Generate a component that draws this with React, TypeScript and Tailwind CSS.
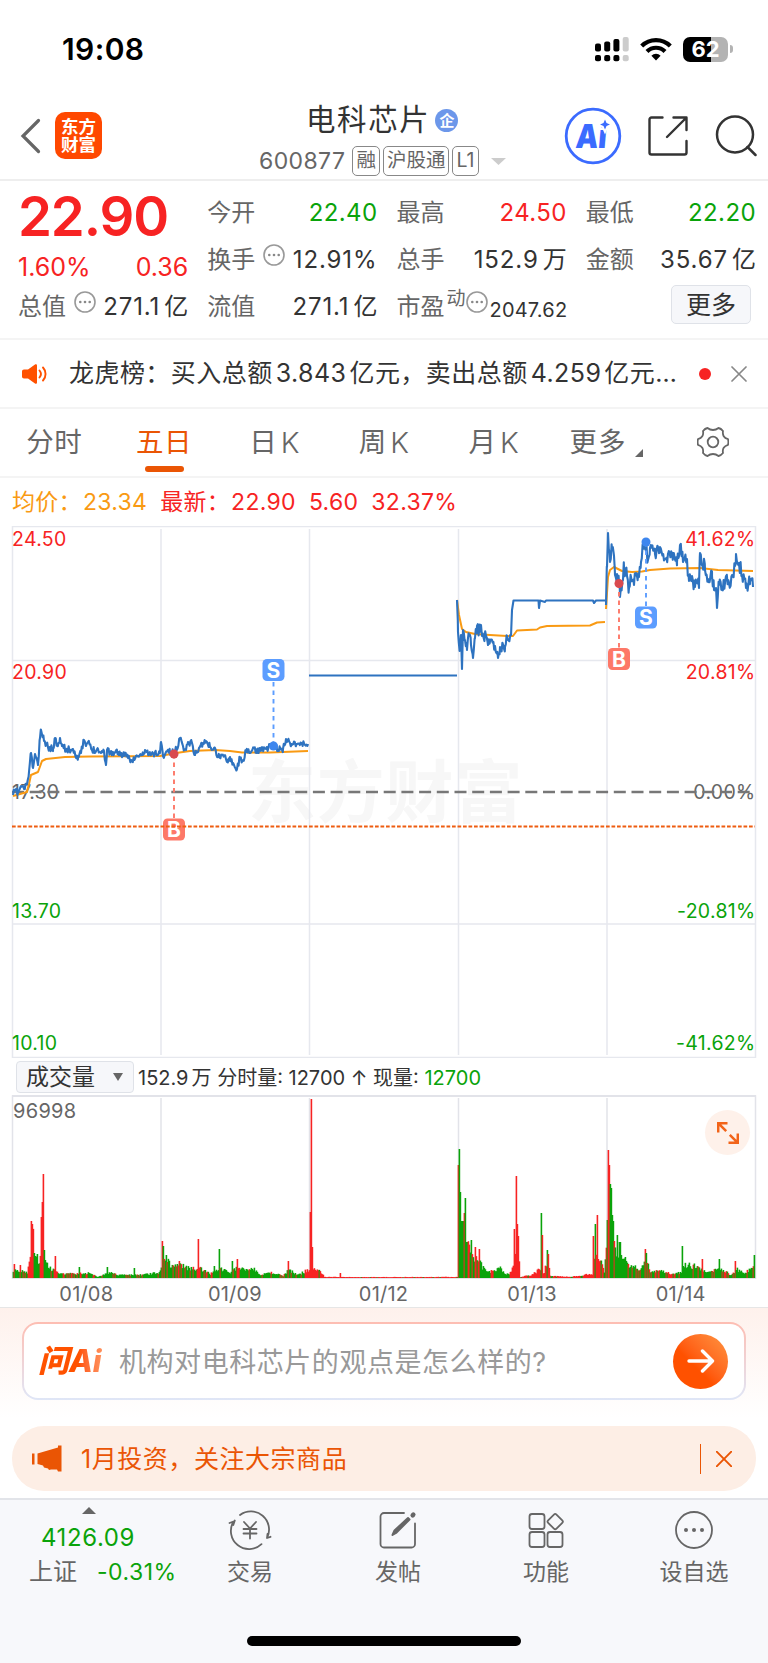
import type { ReactNode } from "react";

type Point = [x: number, y: number];
type Bar = { x: number; h: number; up: boolean };

const UP = "#f72323";
const DOWN = "#0aa30a";

// small deterministic generator so the chart is the same on each render
const createRandom = (seed: number) => () => {
  seed = (seed * 16807) % 2147483647;
  return seed / 2147483647;
};

const valueAt = (points: Point[], x: number) => {
  for (let i = 1; i < points.length; i++) {
    const [x0, y0] = points[i - 1];
    const [x1, y1] = points[i];
    if (x <= x1) return x1 === x0 ? y1 : y0 + ((y1 - y0) * (x - x0)) / (x1 - x0);
  }
  return points[points.length - 1][1];
};

const toPath = (points: Point[]) => "M" + points.map(([x, y]) => `${x} ${y.toFixed(1)}`).join("L");

const jitterPath = (points: Point[], amount: number, seed: number) => {
  const random = createRandom(seed);
  const result: Point[] = [];
  points.forEach(([x, y], i) => {
    result.push([x, y]);
    const next = points[i + 1];
    if (!next) return;
    for (let px = x + 0.8; px < next[0]; px += 0.8) {
      result.push([px, valueAt([[x, y], next], px) + (random() - 0.5) * 2 * amount]);
    }
  });
  return toPath(result);
};

const PRICE_EARLY: Point[] = [
  [13, 795], [15, 790], [18, 793], [21, 786], [24, 789], [27, 784], [29, 772], [31, 753], [33, 768], [35, 754],
  [38, 765], [40, 738], [41, 730], [44, 741], [49, 748], [53, 749], [55, 738], [57, 745], [60, 738], [62, 746],
  [67, 750], [73, 749], [78, 758], [81, 753], [84, 740], [86, 746], [88, 742], [92, 750], [98, 749], [101, 753],
  [104, 751], [106, 765], [107, 750], [112, 753], [118, 752], [124, 756], [128, 756], [132, 761], [138, 756],
  [143, 755], [145, 750], [150, 755], [156, 753], [160, 753], [161, 742], [163, 756], [168, 750], [171, 754],
  [176, 750], [180, 738], [183, 746], [186, 750], [188, 742], [192, 743], [195, 755], [199, 748], [203, 743],
  [207, 742], [210, 747], [214, 748], [218, 757], [222, 755], [227, 760], [230, 757], [234, 765], [237, 769],
  [240, 758], [243, 760], [246, 752], [250, 753], [254, 748], [257, 753], [260, 748], [266, 749], [270, 746],
  [274, 745], [278, 750], [283, 749], [286, 739], [290, 743], [295, 743], [301, 744], [308, 744],
];

const PRICE_0113_OPEN: Point[] = [
  [457, 600], [458, 632], [460, 650], [461, 635], [462, 669], [463, 630], [465, 640], [467, 650], [469, 635],
  [471, 645], [473, 658], [475, 638], [477, 626], [479, 632], [481, 625], [482, 636], [486, 636], [488, 645],
  [491, 640], [495, 646], [498, 658], [500, 647], [505, 647], [507, 636], [511, 636],
];

const PRICE_0113_LIMIT: Point[] = [
  [511, 636], [512, 610], [513.5, 600.5], [538.5, 600.5], [539, 608], [540, 600.5], [545, 602], [546, 600.5],
  [593, 600.5], [594, 603], [596, 600.5], [605, 600.5],
];

const PRICE_0114: Point[] = [
  [606, 605], [607, 567], [608, 533], [610, 562], [612, 548], [614, 556], [615, 575], [617, 574], [619, 583],
  [620, 597], [623, 580], [624, 567], [627, 576], [629, 588], [631, 577], [634, 585], [636, 573], [639, 577],
  [641, 562], [643, 547], [645, 540], [648, 560], [650, 548], [655, 554], [660, 547], [664, 560], [668, 554],
  [673, 553], [677, 562], [680, 545], [683, 562], [687, 559], [689, 581], [692, 576], [695, 587], [699, 585],
  [700, 553], [705, 570], [708, 579], [712, 576], [714, 590], [716, 588], [717, 608], [719, 585], [722, 590],
  [726, 577], [729, 583], [732, 575], [735, 566], [736, 554], [739, 563], [742, 575], [746, 583], [750, 582], [753, 587],
];

const AVERAGES: Point[][] = [
  [
    [13, 796], [27, 792], [29, 784], [31, 775], [38, 772], [42, 761], [46, 759], [65, 757], [90, 756.5], [160, 756],
    [176, 753], [190, 751], [215, 750], [230, 751], [242, 752.5], [270, 752.5], [308, 751],
  ],
  [
    [457, 600], [459, 615], [462, 629], [466, 632], [475, 634], [490, 635], [507, 636], [513, 636], [517, 630.5],
    [537, 629.5], [540, 627.5], [547, 626], [590, 625.5], [597, 622.5], [605, 622],
  ],
  [
    [606, 609], [608, 577], [610, 570], [614, 567], [622, 571], [632, 572], [642, 571.5], [650, 570], [670, 568.5],
    [700, 568], [718, 570], [753, 571],
  ],
];

// usual bar height along the axis, isolated peaks are listed below
const VOLUME_BASE: Point[] = [
  [13, 8], [20, 7], [27, 5], [29, 14], [31, 40], [33, 42], [35, 22], [39, 13], [41, 45], [43, 60], [45, 20], [48, 10],
  [52, 8], [60, 4], [76, 4], [90, 5], [97, 1], [110, 5], [118, 3], [130, 3], [140, 3], [158, 5], [162, 14], [165, 23],
  [170, 12], [180, 12], [192, 9], [200, 9], [210, 4], [220, 9], [230, 5], [237, 11], [246, 8], [254, 8], [260, 3],
  [272, 5], [283, 2], [288, 8], [298, 3], [308, 8], [313, 10], [322, 5], [324, 1], [360, 0.8], [457, 1], [458, 80],
  [465, 56], [467, 40], [470, 24], [476, 20], [482, 11], [490, 6], [500, 9], [504, 4], [511, 5], [514, 22], [518, 38],
  [520, 1], [531, 3], [539, 8], [544, 5], [547, 20], [550, 2], [570, 1], [592, 4], [594, 22], [600, 17], [604, 6],
  [607, 50], [612, 50], [615, 30], [621, 22], [628, 12], [640, 9], [646, 17], [650, 6], [660, 7], [670, 4], [681, 6],
  [683, 14], [690, 12], [700, 10], [710, 5], [720, 10], [730, 3], [737, 8], [744, 5], [750, 8], [754, 14],
];

const VOLUME_PEAKS: [number, number, boolean][] = [
  [14, 14, true], [20, 13, true], [31, 57, true], [32, 54, true], [34, 25, false], [37, 24, false], [41, 61, true],
  [42, 76, true], [43, 104, true], [44, 28, false], [45, 18, false], [55, 22, true], [79, 11, false], [107, 11, false],
  [134, 10, false], [162, 37, true], [163, 32, false], [166, 23, false], [179, 17, true], [198, 39, true],
  [214, 12, false], [219, 29, false], [232, 17, false], [237, 19, true], [288, 17, true], [310, 66, true],
  [311, 179, true], [312, 31, true], [340, 5, true], [458, 113, true], [459, 129, false], [460, 86, false],
  [461, 57, false], [462, 57, false], [463, 57, false], [464, 65, true], [465, 80, false], [466, 36, false],
  [467, 36, false], [471, 38, false], [475, 31, true], [479, 29, true], [514, 49, true], [516, 102, true],
  [517, 54, true], [518, 42, true], [541, 65, false], [542, 43, true], [547, 28, false], [548, 24, true],
  [593, 42, true], [595, 54, false], [597, 63, true], [607, 58, false], [608, 128, true], [609, 113, true],
  [610, 94, false], [611, 90, false], [612, 63, false], [613, 57, false], [614, 37, true], [617, 43, false],
  [619, 36, false], [620, 36, false], [645, 29, true], [646, 25, false], [682, 32, false], [702, 19, true],
  [719, 19, false], [735, 17, true], [754, 23, false],
];

const buildVolume = (): Bar[] => {
  const random = createRandom(4217);
  const bars: Bar[] = [];
  for (let x = 13; x <= 754; x++) {
    const peak = VOLUME_PEAKS.find((p) => p[0] === x);
    const h = valueAt(VOLUME_BASE, x) * (0.75 + random() * 0.55);
    const mostlyUp = (x > 28 && x < 34) || (x > 39 && x < 44) || (x > 305 && x < 458) || (x > 510 && x < 600);
    const up = random() < (mostlyUp ? 0.92 : 0.25);
    bars.push(peak ? { x, h: peak[1], up: peak[2] } : { x, h: Math.max(h, 0.6), up });
  }
  return bars;
};

const volumeBars = buildVolume();

const DotsIcon = () => (
  <svg className="h-[22px] w-[22px] shrink-0" viewBox="0 0 22 22" fill="none" stroke="#999" strokeWidth="1.6">
    <circle cx="11" cy="11" r="10" />
    <g fill="#888" stroke="none">
      <circle cx="6.3" cy="11" r="1.3" />
      <circle cx="11" cy="11" r="1.3" />
      <circle cx="15.7" cy="11" r="1.3" />
    </g>
  </svg>
);

function StatusBar() {
  return (
    <div className="flex h-[98px] items-center justify-between pl-[62px] pr-[35px]">
      <span className="text-[30px] font-semibold leading-none tracking-[0.4px] text-black">19:08</span>
      <div className="flex items-center gap-[11px]">
        <svg className="h-[26px] w-[34px]" viewBox="0 0 34 26">
          {[8, 10, 12.5].map((h, i) => (
            <g key={h}>
              <rect x={i * 9.2} y={15.5 - h} width="6" height={h} rx="2" />
              <rect x={i * 9.2} y="19" width="6" height="6.3" rx="2" />
            </g>
          ))}
          <g fill="#ccc">
            <rect x="27.7" y="1" width="6" height="14.5" rx="2" />
            <rect x="27.7" y="19" width="6" height="6.3" rx="2" />
          </g>
        </svg>
        <svg className="h-6 w-8" viewBox="0 0 32 24" fill="none" stroke="#000" strokeWidth="4.2">
          <path d="M1.7 9A20.2 20.2 0 0 1 30.3 9" />
          <path d="M7 14.5a12.7 12.7 0 0 1 18 0" />
          <path d="M16 23.5l-4.6-4.8a6.5 6.5 0 0 1 9.2 0z" fill="#000" stroke="none" />
        </svg>
        <div className="flex items-center gap-[2px]">
          <div className="flex h-[25px] w-[45px] items-center justify-center rounded-[7px] bg-[linear-gradient(90deg,#000_62%,#b3b3b3_62%)] text-[22px] font-bold text-white">
            62
          </div>
          <div className="h-2 w-[3px] rounded-r-full bg-[#b3b3b3]" />
        </div>
      </div>
    </div>
  );
}

const Tag = ({ children }: { children: ReactNode }) => (
  <span className="flex h-[30px] items-center rounded-[5px] border border-[#888] px-[3px] text-[19.5px] leading-none text-[#666]">
    {children}
  </span>
);

function Header() {
  return (
    <header className="flex h-[83px] items-start border-b-2 border-[#eee] pl-5 pr-[11px]">
      <svg className="mt-[20px] h-9 w-[21px]" viewBox="0 0 21 36" fill="none" stroke="#666" strokeWidth="3.2" strokeLinecap="round">
        <path d="M18.5 2.5L3 18l15.5 15.5" />
      </svg>
      <div className="ml-[14px] mt-[14px] flex h-[47px] w-[47px] flex-col items-center justify-center rounded-[10px] bg-[#ff4800] text-[17.5px] font-bold leading-[18px] text-white">
        <span>东方</span>
        <span>财富</span>
      </div>
      <div className="ml-[157px] flex flex-col">
        <div className="ml-[47px] flex h-[44px] items-center">
          <span className="text-[29.5px] leading-none tracking-[1.6px] text-[#333]">电科芯片</span>
          <span className="ml-[5px] flex h-[23px] w-[23px] items-center justify-center rounded-full bg-[#6c97ea] text-[15px] font-bold leading-none text-white">
            企
          </span>
        </div>
        <div className="mt-[4px] flex items-center">
          <span className="text-[23px] leading-none tracking-[0.4px] text-[#666]">600877</span>
          <div className="ml-[7px] flex gap-[3px]">
            <Tag>融</Tag>
            <Tag>沪股通</Tag>
            <Tag>L1</Tag>
          </div>
          <svg className="ml-[12px] h-[7px] w-[15px]" viewBox="0 0 15 7">
            <path d="M0 0h15L7.5 7z" fill="#ccc" />
          </svg>
        </div>
      </div>
      <div className="ml-auto mt-[9px] flex items-center">
        <svg className="h-[58px] w-[58px]" viewBox="0 0 58 58">
          <circle cx="29" cy="29" r="26.8" fill="none" stroke="#3b6bff" strokeWidth="2.8" />
          <text transform="translate(11 40.5) skewX(-5) scale(.86 1)" fontSize="33" fontWeight="900" fill="#3b6bff">
            Ai
          </text>
          <path d="M41 12.500l1.500 3.500 3.500 1.500-3.500 1.500-1.500 3.500-1.500-3.500-3.500-1.500 3.500-1.500z" fill="#3b6bff" stroke="#fff" strokeWidth="4" paintOrder="stroke" />
        </svg>
        <svg className="ml-[26px] h-10 w-10" viewBox="0 0 40 40" fill="none" stroke="#333" strokeWidth="2.4" strokeLinecap="round" strokeLinejoin="round">
          <path d="M14.5 1.5h-11a2 2 0 0 0-2 2v33a2 2 0 0 0 2 2h33a2 2 0 0 0 2-2V25" />
          <path d="M25.5 1.5h13V14M38 2L19 21" />
        </svg>
        <svg className="ml-[27px] h-[42px] w-[42px]" viewBox="0 0 42 42" fill="none" stroke="#333" strokeWidth="2.5" strokeLinecap="round">
          <circle cx="20" cy="19.500" r="18" />
          <path d="M32.500 32l8 8" />
        </svg>
      </div>
    </header>
  );
}

const Stat = ({ label, value, color = "text-[#333]", dots = false }: { label: string; value: string; color?: string; dots?: boolean }) => {
  const unit = value.match(/[万亿]$/)?.[0];
  return (
    <div className="-mr-px flex h-[47px] items-center justify-between whitespace-nowrap leading-none">
      <span className="text-2xl leading-none text-[#666]">{label}</span>
      {dots && (
        <span className="-mt-[9px]">
          <DotsIcon />
        </span>
      )}
      <span className={`flex text-2xl leading-none ${color}`}>
        <span className={unit || dots ? "tracking-[0.9px]" : "tracking-[0.4px]"}>{unit ? value.slice(0, -1) : value}</span>
        {unit && <span className="ml-[4px]">{unit}</span>}
      </span>
    </div>
  );
};

function Quote() {
  return (
    <section className="grid h-[159px] grid-cols-4 gap-x-5 border-b-2 border-[#f4f4f4] pl-[18px] pr-[13px] pt-2">
      <div>
        <p className="h-[55px] text-[54.5px] font-semibold leading-none tracking-[-1.1px] text-[#f72323]">22.90</p>
        <div className="-mr-px flex h-[39px] items-end justify-between text-[25px] leading-[32px] text-[#f72323]">
          <span>1.60%</span>
          <span>0.36</span>
        </div>
        <Stat label="总值" value="271.1亿" dots />
      </div>
      <div>
        <Stat label="今开" value="22.40" color="text-[#0aa30a]" />
        <Stat label="换手" value="12.91%" dots />
        <Stat label="流值" value="271.1亿" />
      </div>
      <div>
        <Stat label="最高" value="24.50" color="text-[#f72323]" />
        <Stat label="总手" value="152.9万" />
        <div className="-mr-2 flex h-[47px] items-center whitespace-nowrap leading-none">
          <span className="text-2xl leading-none text-[#666]">市盈</span>
          <span className="-mt-4 ml-[2px] text-[19px] leading-none text-[#666]">动</span>
          <span className="-mt-[9px]">
            <DotsIcon />
          </span>
          <span className="ml-[2px] mt-[7px] text-[20px] tracking-[0.2px] text-[#333]">2047.62</span>
        </div>
      </div>
      <div>
        <Stat label="最低" value="22.20" color="text-[#0aa30a]" />
        <Stat label="金额" value="35.67亿" />
        <div className="flex h-[47px] items-start justify-end pr-1 pt-[2px]">
          <button className="h-[39px] w-20 rounded-[5px] border-[1.5px] border-[#dfe2e8] bg-[#f6f7fa] pt-[2px] text-[25px] leading-none text-[#333]">
            更多
          </button>
        </div>
      </div>
    </section>
  );
}

function NewsBar() {
  return (
    <section className="flex h-[69px] items-center border-b-2 border-[#f4f4f4] pl-[22px] pr-[21px]">
      <svg className="h-5 w-[25px]" viewBox="0 0 25 20">
        <path d="M2 5.500h4L13 .5c1-.6 2 0 2 1v17c0 1-1 1.600-2 1L6 14.500H2c-1.200 0-2-.8-2-2v-5c0-1.200.8-2 2-2z" fill="#ff5100" />
        <path d="M17.500 6.500c1.700 2 1.700 5 0 7M21 3.500c3.400 3.600 3.400 9.400 0 13" fill="none" stroke="#ff5100" strokeWidth="1.900" strokeLinecap="round" />
      </svg>
      <p className="ml-[22px] flex whitespace-nowrap text-[25px] leading-none tracking-[0.45px] text-[#333]">
        <span>龙虎榜：</span>
        <span>
          买入总额<span className="ml-[3px] mr-[3px]">3.843</span>亿元，
        </span>
        <span>
          卖出总额<span className="ml-[3px] mr-[3px]">4.259</span>亿元…
        </span>
      </p>
      <span className="ml-auto mr-[20px] h-3 w-3 rounded-full bg-[#f72323]" />
      <svg className="h-4 w-4" viewBox="0 0 16 16" stroke="#888" strokeWidth="1.700" strokeLinecap="round">
        <path d="M1 1l14 14M15 1L1 15" />
      </svg>
    </section>
  );
}

function PeriodTabs() {
  const tabs = ["分时", "五日", "日K", "周K", "月K"];
  return (
    <nav className="grid h-[69px] grid-cols-7 border-b-2 border-[#f4f4f4] text-[27.5px] leading-none text-[#666]">
      {tabs.map((tab) => (
        <div key={tab} className={`flex flex-col items-center pt-[20px] ${tab === "五日" ? "text-[#ea5504]" : ""}`}>
          {tab.endsWith("K") ? (
            <span className="flex gap-[4px]">
              <span>{tab[0]}</span>
              <span className="text-[29px] font-light leading-[27px]">K</span>
            </span>
          ) : (
            <span className="-ml-px tracking-[0.5px]">{tab}</span>
          )}
          {tab === "五日" && <span className="mt-[9px] h-[6px] w-[39px] rounded-full bg-[#ea5504]" />}
        </div>
      ))}
      <div className="flex items-start justify-center gap-[9px] pl-[6px] pt-[20px]">
        <span className="tracking-[1px]">更多</span>
        <svg className="mt-[20px] h-2 w-2" viewBox="0 0 8 8">
          <path d="M8 0v8H0z" fill="#666" />
        </svg>
      </div>
      <div className="flex items-start justify-center pt-[17px]">
        <svg className="h-8 w-8" viewBox="0 0 32 32" fill="none" stroke="#666" strokeWidth="1.800" strokeLinejoin="round">
          <path d="M10.500 2Q13 4 16 4t5.500-2Q24 2.500 26 5q-.5 3.200.7 5.200T31 13.200q.8 2.800 0 5.600-3 1-4.300 3T26 27q-2 2.500-4.500 3-2.500-2-5.500-2t-5.500 2Q8 29.500 6 27q.5-3.200-.7-5.200T1 18.800q-.8-2.800 0-5.600 3-1 4.300-3T6 5q2-2.500 4.500-3z" />
          <circle cx="16" cy="16" r="5.300" />
        </svg>
      </div>
    </nav>
  );
}

const Marker = ({ x, dotY, boxY, type }: { x: number; dotY: number; boxY: number; type: "B" | "S" }) => {
  const color = type === "B" ? "#fd7868" : "#5c9dff";
  const edge = boxY > dotY ? boxY - 11 : boxY + 11;
  return (
    <g>
      <line x1={x} y1={dotY} x2={x} y2={edge} stroke={color} strokeWidth="1.900" strokeDasharray="4.500 4" />
      <circle cx={x} cy={dotY} r="4.500" fill={type === "B" ? "#d94a4f" : "#3d86ee"} />
      <rect x={x - 11} y={boxY - 11} width="22" height="22" rx="4.500" fill={color} />
      <text x={x} y={boxY + 7.500} textAnchor="middle" fontSize="21" fontWeight="700" fill="#fff">
        {type}
      </text>
    </g>
  );
};

function PriceChart() {
  const labels = [
    { y: 546, price: "24.50", percent: "41.62%", color: UP },
    { y: 678.5, price: "20.90", percent: "20.81%", color: UP },
    { y: 798.5, price: "17.30", percent: "0.00%", color: "#666" },
    { y: 918, price: "13.70", percent: "-20.81%", color: DOWN },
    { y: 1050, price: "10.10", percent: "-41.62%", color: DOWN },
  ];
  return (
    <svg className="block h-[532px] w-full" viewBox="0 526 768 532" fill="none">
      <text x="248" y="817" fontSize="68" fontWeight="700" letterSpacing="0.800" fill="#f7f7f7">
        东方财富
      </text>
      <g stroke="#e6e8ee" strokeWidth="1.500">
        <path d="M12.500 526.500H755.500V1057.500H12.500z" />
        <path d="M12 660.500H755M12 924H755" />
        <path d="M161 529V1055M309.500 529V1055M458.500 529V1055M607 529V1055" />
      </g>
      {labels.map((l) => (
        <g key={l.y} fontSize="19.500" letterSpacing="0.300" fill={l.color}>
          <text x="12" y={l.y}>{l.price}</text>
          <text x="755.500" y={l.y} textAnchor="end">{l.percent}</text>
        </g>
      ))}
      <path d="M12 792H755" stroke="#777" strokeWidth="2.300" strokeDasharray="12 5.700" />
      <g stroke="#f99a13" strokeWidth="2" strokeLinejoin="round">
        {AVERAGES.map((points) => (
          <path key={points[0][0]} d={toPath(points)} />
        ))}
      </g>
      <g stroke="#2e73c0" strokeWidth="2.100" strokeLinejoin="round">
        <path d={jitterPath(PRICE_EARLY, 3.400, 11)} />
        <path d="M309 675.500H457" />
        <path d={jitterPath(PRICE_0113_OPEN, 5.500, 29)} />
        <path d={toPath(PRICE_0113_LIMIT)} />
        <path d={jitterPath(PRICE_0114, 8, 5)} />
      </g>
      <Marker x={174} dotY={754} boxY={829.500} type="B" />
      <Marker x={273.500} dotY={746} boxY={670} type="S" />
      <Marker x={619} dotY={583.500} boxY={659} type="B" />
      <Marker x={646} dotY={542} boxY={617.500} type="S" />
      <path d="M12 826.500H755" stroke="#ee5d10" strokeWidth="2" strokeDasharray="3.700 1.800" />
    </svg>
  );
}

function VolumeChart() {
  return (
    <div className="relative">
      <svg className="block h-[184px] w-full" viewBox="0 1095 768 184" fill="none">
        <g stroke="#e2e3e9" strokeWidth="2">
          <path d="M12.500 1096H755.500V1279H12.500z" strokeWidth="1.500" />
          <path d="M161 1098V1278M309.500 1098V1278M458.500 1098V1278M607 1098V1278" strokeWidth="1.500" />
          <path d="M12 1096H756M12 1278.500H756" />
        </g>
        <text x="13" y="1118" fontSize="20" letterSpacing="0.300" fill="#666">96998</text>
        {volumeBars.map((bar) => (
          <rect key={bar.x} x={bar.x - 0.4} y={1278 - bar.h} width="1.600" height={bar.h} fill={bar.up ? UP : DOWN} />
        ))}
      </svg>
      <div className="absolute right-[18px] top-[15px] flex h-[45px] w-[45px] items-center justify-center rounded-full bg-[#fef1ea]">
        <svg className="h-[22px] w-[22px]" viewBox="0 0 22 22" fill="none" stroke="#f26419" strokeWidth="2.500">
          <path d="M1.200 10.500V1.200h9.300M1.200 1.200l8 8M20.800 11.500v9.300h-9.300M20.800 20.800l-8-8" />
        </svg>
      </div>
    </div>
  );
}

function AskAi() {
  return (
    <section className="h-[111px] border-t border-[#e6e6e6] bg-gradient-to-b from-[#fef1ec] to-white px-[22px] pt-[14px]">
      <div className="h-[78px] rounded-[16px] bg-gradient-to-b from-[#fdbdb2] to-[#dfe6f7] p-[2px]">
        <div className="flex h-full items-center rounded-[14px] bg-white pl-[14px] pr-4">
          <span className="w-[68px] whitespace-nowrap bg-gradient-to-r from-[#ff5200] from-60% to-[#ff9a66] bg-clip-text text-[31px] font-extrabold italic leading-[36px] tracking-[-0.1px] text-transparent">
            问Ai
          </span>
          <span className="ml-[13px] mt-[2px] text-[27px] leading-none tracking-[0.55px] text-[#999]">机构对电科芯片的观点是怎么样的?</span>
          <span className="ml-auto flex h-[55px] w-[55px] items-center justify-center rounded-full bg-gradient-to-tr from-[#ff5100] from-40% to-[#ff9440] text-white">
            <svg className="h-6 w-7" viewBox="0 0 28 24" fill="none" stroke="currentColor" strokeWidth="3.400" strokeLinecap="round" strokeLinejoin="round">
              <path d="M2 12h23M15.500 2L25.500 12l-10 10" />
            </svg>
          </span>
        </div>
      </div>
    </section>
  );
}

function Banner() {
  return (
    <section className="mx-3 mt-[8px] flex h-[65px] items-center rounded-[32px] bg-[#fdeee5] pl-5 pr-6 text-[#ea5504]">
      <svg className="h-[27px] w-[30px]" viewBox="0 0 30 27" fill="currentColor">
        <path d="M0 8.500h2.500v11H0zM5.500 8.500L26 2.500V0.500h3.500v26H26l-1-2-6 0-2 .5-1-1.500-4-1-1-2-5.500-1.500z" />
      </svg>
      <span className="ml-[19px] mt-[2px] text-[25px] leading-none tracking-[0.55px]">1月投资，关注大宗商品</span>
      <span className="ml-auto h-[30px] w-[1.500px] bg-[#ea5504]" />
      <svg className="ml-[15px] h-4 w-4" viewBox="0 0 16 16" stroke="currentColor" strokeWidth="1.900" strokeLinecap="round">
        <path d="M.7.7l14.600 14.600M15.300.7L.7 15.300" />
      </svg>
    </section>
  );
}

const NavItem = ({ label, children }: { label: string; children: ReactNode }) => (
  <div className="flex flex-col items-center">
    <svg className="mt-[10px] h-10 w-11" viewBox="0 0 44 40" fill="none" stroke="#666" strokeWidth="1.800" strokeLinecap="round" strokeLinejoin="round">
      {children}
    </svg>
    <span className="mt-[11px] text-[23px] leading-none text-[#666]">{label}</span>
  </div>
);

function BottomBar() {
  return (
    <footer className="flex h-[165px] flex-col border-t-2 border-[#e2e4e9] bg-[#f7f8fb]">
      <div className="grid grid-cols-[176px_repeat(4,148px)]">
        <div className="flex flex-col items-center whitespace-nowrap leading-none">
          <svg className="ml-[2px] mt-[7px] h-[7px] w-[14px]" viewBox="0 0 14 7">
            <path d="M0 7h14L7 0z" fill="#666" />
          </svg>
          <span className="mt-[12px] text-2xl leading-none tracking-[0.6px] text-[#0aa30a]">4126.09</span>
          <div className="mt-[10px] flex items-center gap-[20px] self-start pl-[29px] text-2xl leading-none">
            <span className="text-[#666]">上证</span>
            <span className="text-[23px] tracking-[0.5px] text-[#0aa30a]">-0.31%</span>
          </div>
        </div>
        <NavItem label="交易">
          <path d="M12 5A18.200 18.200 0 0 1 39 28l3.500-1.200M39 28l.5-4M33.500 34.200A18.200 18.200 0 0 1 5.500 11.500L1.500 13M6.800 10.500L5.300 15" />
          <path d="M16 12l6 6.500 6-6.500M22 18.500v10M15.500 19h13M15.500 23.500h13" />
        </NavItem>
        <NavItem label="发帖">
          <path d="M28 3H8a3.500 3.500 0 0 0-3.500 3.500V34a3.500 3.500 0 0 0 3.500 3.500h27.500A3.500 3.500 0 0 0 39 34V13.500" />
          <path d="M16.500 25l2-4.500L32 8l1.500 1.500L20 23z" fill="#666" strokeWidth="2" />
          <path d="M36.700 5.300l.6-.6" strokeWidth="4.500" />
        </NavItem>
        <NavItem label="功能">
          <rect x="5.500" y="4" width="15" height="15" rx="2.500" />
          <rect x="5.500" y="22" width="15" height="15" rx="2.500" />
          <rect x="23.500" y="22" width="15" height="15" rx="2.500" />
          <rect x="25.300" y="5.700" width="11.800" height="11.800" rx="1.800" transform="rotate(45 31.200 11.600)" />
        </NavItem>
        <NavItem label="设自选">
          <circle cx="22" cy="20" r="18" />
          <g fill="#666" stroke="none">
            <circle cx="14" cy="20" r="2" />
            <circle cx="22" cy="20" r="2" />
            <circle cx="30" cy="20" r="2" />
          </g>
        </NavItem>
      </div>
      <div className="mx-auto mb-[17px] mt-auto h-[10px] w-[274px] rounded-full bg-black" />
    </footer>
  );
}

export default function App() {
  return (
    <div className="flex h-[1663px] w-[768px] flex-col overflow-hidden bg-white font-['Inter','Noto_Sans_CJK_SC',sans-serif]">
      <StatusBar />
      <Header />
      <Quote />
      <NewsBar />
      <PeriodTabs />
      <div className="flex h-[48px] items-center whitespace-nowrap pl-3 pt-px text-[23px] leading-none tracking-[0.3px] text-[#f72323]">
        <span className="text-[#f99a13]">均价：</span>
        <span className="ml-[1px] text-[#f99a13]">23.34</span>
        <span className="ml-[13px]">最新：</span>
        <span className="ml-[1px]">22.90</span>
        <span className="ml-[13px]">5.60</span>
        <span className="ml-[13px]">32.37%</span>
      </div>
      <PriceChart />
      <div className="flex h-[37px] items-center pl-4 pt-px text-[20px] leading-none text-[#333]">
        <div className="flex h-8 w-[118px] items-center justify-between rounded-[4px] border-[1.500px] border-[#dfe2e8] bg-[#f6f7fa] pl-[9px] pr-[10px] text-[23px]">
          <span>成交量</span>
          <svg className="h-2 w-[10px]" viewBox="0 0 10 8">
            <path d="M0 0h10L5 8z" fill="#666" />
          </svg>
        </div>
        <span className="ml-[4px] mt-px whitespace-pre">
          152.9<span className="ml-[3px]">万</span> 分时量: 12700 ↑ 现量: <span className="text-[#0aa30a]">12700</span>
        </span>
      </div>
      <VolumeChart />
      <div className="grid h-[28px] grid-cols-5 items-center pl-3 pr-[13px] pt-[2px] text-center text-[20px] leading-none tracking-[0.2px] text-[#666]">
        {["01/08", "01/09", "01/12", "01/13", "01/14"].map((date) => (
          <span key={date}>{date}</span>
        ))}
      </div>
      <AskAi />
      <Banner />
      <div className="mt-auto">
        <BottomBar />
      </div>
    </div>
  );
}
